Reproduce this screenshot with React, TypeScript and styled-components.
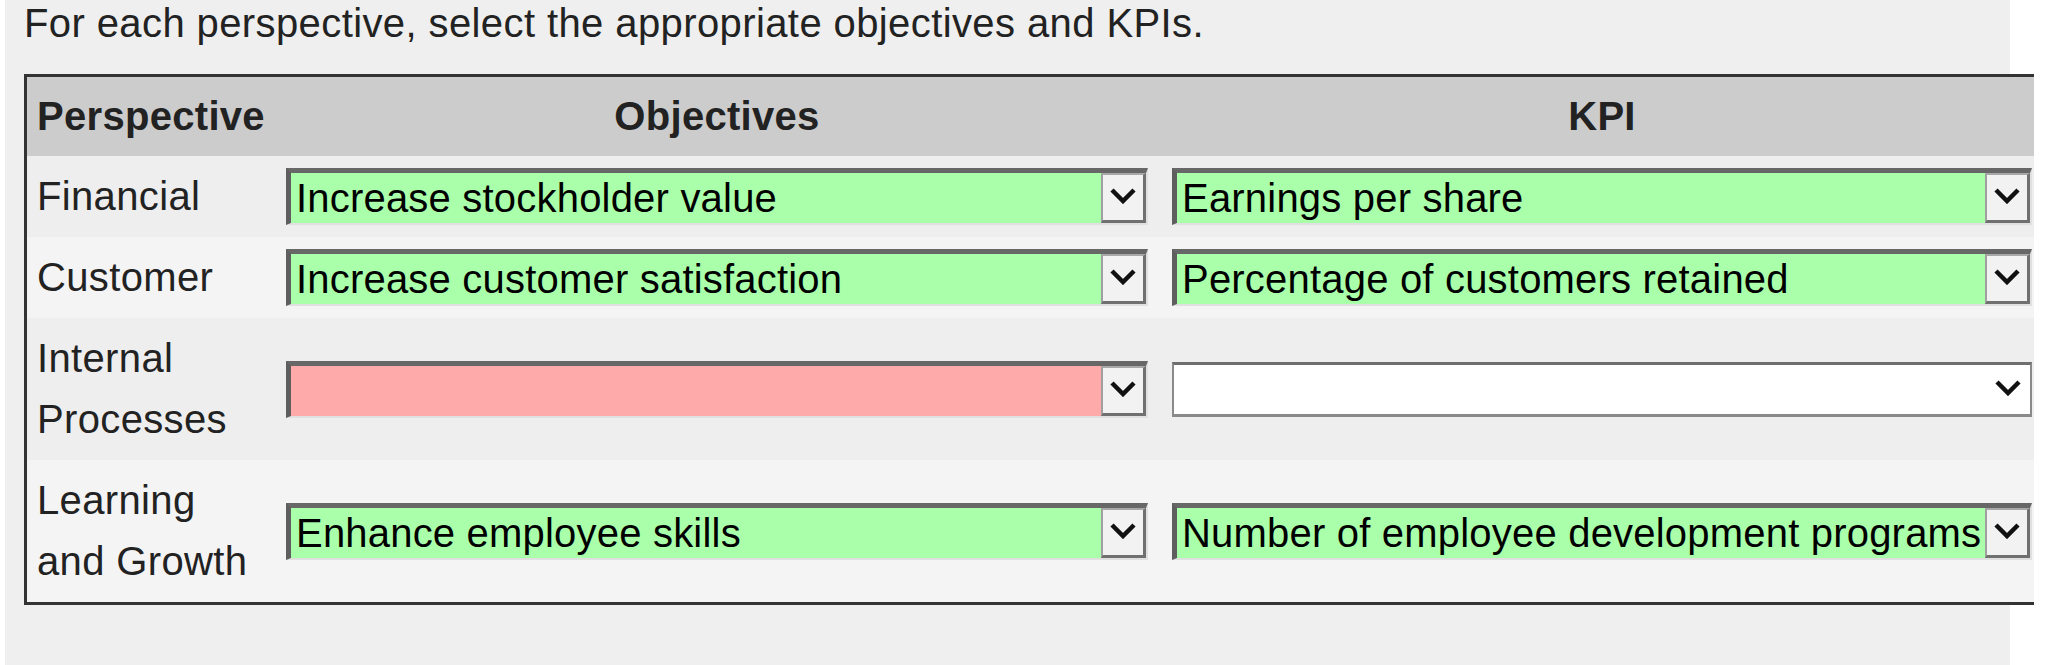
import React from "react";
import styled, { createGlobalStyle } from "styled-components";

type Tone = "ok" | "bad" | "plain";

interface IRow {
  perspective: string;
  objective: string;
  objectiveTone: Tone;
  kpi: string;
  kpiTone: Tone;
}

const rows: IRow[] = [
  { perspective: "Financial", objective: "Increase stockholder value", objectiveTone: "ok", kpi: "Earnings per share", kpiTone: "ok" },
  { perspective: "Customer", objective: "Increase customer satisfaction", objectiveTone: "ok", kpi: "Percentage of customers retained", kpiTone: "ok" },
  { perspective: "Internal Processes", objective: "", objectiveTone: "bad", kpi: "", kpiTone: "plain" },
  { perspective: "Learning and Growth", objective: "Enhance employee skills", objectiveTone: "ok", kpi: "Number of employee development programs", kpiTone: "ok" },
];

const toneBg: Record<Tone, string> = {
  ok: "#aaffaa",
  bad: "#ffaaaa",
  plain: "#ffffff",
};

function Chevron() {
  return (
    <svg width="26" height="16" viewBox="0 0 26 16">
      <polyline points="2,2 13,13 24,2" fill="none" stroke="#111" strokeWidth="4.5" />
    </svg>
  );
}

function Dropdown({ value, tone }: { value: string; tone: Tone }) {
  return (
    <Frame $tone={tone}>
      <NativeSelect defaultValue={value}>
        <option value={value}>{value}</option>
      </NativeSelect>
      <Arrow $tone={tone}>
        <Chevron />
      </Arrow>
    </Frame>
  );
}

export default function App() {
  return (
    <>
      <GlobalStyle />
      <Page>
        <Intro>For each perspective, select the appropriate objectives and KPIs.</Intro>
        <Table>
          <HeaderRow>
            <HeadCell>Perspective</HeadCell>
            <HeadCell $center>Objectives</HeadCell>
            <HeadCell $center>KPI</HeadCell>
          </HeaderRow>
          {rows.map((r, i) => (
            <Row key={r.perspective} $alt={i % 2 === 1}>
              <Label>{r.perspective}</Label>
              <Dropdown value={r.objective} tone={r.objectiveTone} />
              <Dropdown value={r.kpi} tone={r.kpiTone} />
            </Row>
          ))}
        </Table>
      </Page>
    </>
  );
}

const GlobalStyle = createGlobalStyle`
  body {
    margin: 0;
    background: #ffffff;
    font-family: "Liberation Sans", Arial, sans-serif;
  }
`;

const Page = styled.div`
  margin-left: 5px;
  width: 2005px;
  min-height: 665px;
  box-sizing: border-box;
  padding-left: 19px;
  background: #eeefee;
`;

const Intro = styled.p`
  margin: 0;
  font-size: 40px;
  line-height: 46px;
  letter-spacing: 0.4px;
  color: #222;
`;

const Table = styled.div`
  margin-top: 28px;
  width: 2010px;
  box-sizing: border-box;
  border-top: 3px solid #333;
  border-left: 3px solid #333;
  border-bottom: 3px solid #333;
`;

const Grid = styled.div`
  display: grid;
  grid-template-columns: 225px 862px 860px;
  column-gap: 24px;
  align-items: center;
  padding: 10px 2px 10px 10px;
`;

const HeaderRow = styled(Grid)`
  padding-top: 9px;
  padding-bottom: 9px;
  background: #cccccc;
`;

const HeadCell = styled.div<{ $center?: boolean }>`
  font-size: 40px;
  font-weight: bold;
  line-height: 61px;
  letter-spacing: 0.3px;
  color: #222;
  white-space: nowrap;
  text-align: ${(p) => (p.$center ? "center" : "left")};
`;

const Row = styled(Grid)<{ $alt: boolean }>`
  background: ${(p) => (p.$alt ? "#f4f4f4" : "#eeeeee")};
`;

const Label = styled.div`
  font-size: 40px;
  line-height: 61px;
  letter-spacing: 0.35px;
  color: #222;
`;

const Frame = styled.div<{ $tone: Tone }>`
  display: flex;
  align-items: stretch;
  height: ${(p) => (p.$tone === "plain" ? "55px" : "57px")};
  box-sizing: border-box;
  background: ${(p) => toneBg[p.$tone]};
  border-style: solid;
  border-width: ${(p) => (p.$tone === "plain" ? "3px 2px 3px 2px" : "5px 2px 2px 5px")};
  border-color: ${(p) =>
    p.$tone === "plain" ? "#6e6e6e #8a8a8a #8a8a8a #8a8a8a" : "#676767 #e0e0e0 #e0e0e0 #5e5e5e"};
`;

const NativeSelect = styled.select`
  appearance: none;
  flex: 1;
  min-width: 0;
  height: 100%;
  margin: 0;
  padding: 0 0 0 5px;
  border: 0;
  outline: none;
  background: transparent;
  font-family: "Liberation Sans", Arial, sans-serif;
  font-size: 40px;
  letter-spacing: 0.2px;
  color: #000;
`;

const Arrow = styled.span<{ $tone: Tone }>`
  flex: 0 0 45px;
  display: flex;
  align-items: center;
  justify-content: center;
  box-sizing: border-box;
  padding-bottom: 3px;
  background: ${(p) => (p.$tone === "plain" ? "transparent" : "#f2f2f2")};
  border-style: solid;
  border-width: ${(p) => (p.$tone === "plain" ? "0" : "2px 3px 3px 2px")};
  border-color: #a8a8a8 #707070 #707070 #a0a0a0;
`;
